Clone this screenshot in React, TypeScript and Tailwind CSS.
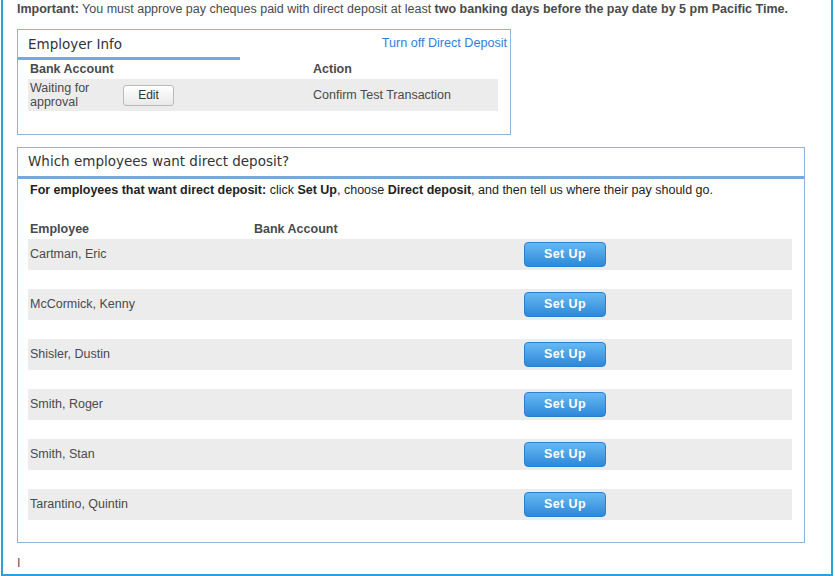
import React from "react";

const employees = [
  "Cartman, Eric",
  "McCormick, Kenny",
  "Shisler, Dustin",
  "Smith, Roger",
  "Smith, Stan",
  "Tarantino, Quintin",
];

export default function App() {
  return (
    <div className="ml-px w-[832px] h-[576px] border-x-2 border-b-2 border-[#2ba0da] bg-white pl-[14px] pt-[2px] font-['Liberation_Sans',Arial,sans-serif] text-[12.5px] leading-[15px] text-[#4a4a4a]">
      <p>
        <b>Important:</b> You must approve pay cheques paid with direct deposit at least{" "}
        <b>two banking days before the pay date by 5 pm Pacific Time.</b>
      </p>

      <div className="mt-[12px] w-[494px] h-[106px] border border-[#8db4dc]">
        <div className="flex justify-between">
          <div className="w-[222px] h-[30px] border-b-[3px] border-[#72aadd] pl-[10px] pt-[6px] font-['DejaVu_Sans',sans-serif] text-[13.5px] leading-[17px] text-[#333]">
            Employer Info
          </div>
          <a className="pr-[3px] pt-[6px] text-[12.6px] text-[#2f80e0]">Turn off Direct Deposit</a>
        </div>
        <div className="mt-[2px] ml-[12px] grid grid-cols-[283px_1fr] h-[17px] font-bold">
          <div>Bank Account</div>
          <div>Action</div>
        </div>
        <div className="ml-[10px] w-[470px] h-[32px] bg-[#ececec] grid grid-cols-[283px_1fr] items-center pl-[2px]">
          <div className="flex items-center">
            <div className="w-[93px] leading-[14px]">
              Waiting for
              <br />
              approval
            </div>
            <button className="w-[51px] h-[21px] rounded-[3px] border border-[#b9b9b9] bg-linear-to-b from-[#ffffff] to-[#e9e9e9] text-[12px] text-[#333]">
              Edit
            </button>
          </div>
          <div>Confirm Test Transaction</div>
        </div>
      </div>

      <div className="mt-[12px] w-[788px] h-[396px] border border-[#8db4dc]">
        <div className="h-[31px] border-b-[3px] border-[#72aadd] pl-[10px] pt-[5px] font-['DejaVu_Sans',sans-serif] text-[13.5px] leading-[17px] text-[#333]">
          Which employees want direct deposit?
        </div>
        <p className="mt-[4px] pl-[12px] text-[#222]">
          <b>For employees that want direct deposit:</b> click <b>Set Up</b>, choose{" "}
          <b>Direct deposit</b>, and then tell us where their pay should go.
        </p>
        <div className="mt-[24px] ml-[12px] grid grid-cols-[224px_1fr] h-[17px] font-bold">
          <div>Employee</div>
          <div>Bank Account</div>
        </div>
        <div className="flex flex-col gap-[19px]">
          {employees.map((name) => (
            <div
              key={name}
              className="ml-[10px] w-[764px] h-[31px] bg-[#ececec] grid grid-cols-[226px_268px_1fr] items-center pl-[2px]"
            >
              <div>{name}</div>
              <div></div>
              <div>
                <button className="w-[82px] h-[25px] rounded-[4px] border border-[#2a80d0] bg-linear-to-b from-[#66b9f2] to-[#2c88d9] text-[12.5px] font-bold tracking-[0.4px] text-white">
                  Set Up
                </button>
              </div>
            </div>
          ))}
        </div>
      </div>

      <div className="mt-[13px] text-[#555]">I</div>
    </div>
  );
}
